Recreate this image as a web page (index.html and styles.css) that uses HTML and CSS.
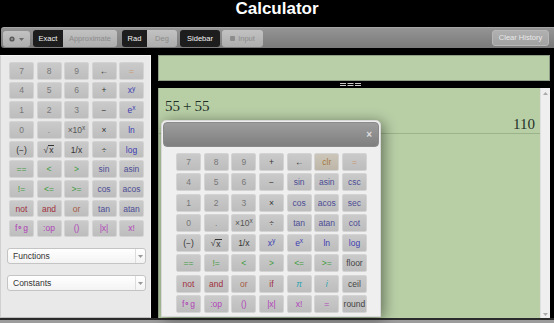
FILE: index.html
```html
<!DOCTYPE html>
<html>
<head>
<meta charset="utf-8">
<title>Calculator</title>
<link rel="stylesheet" href="styles.css">
</head>
<body>
<div class="app">
  <header class="title-bar"><h1 class="title">Calculator</h1></header>
  <div class="toolbar">
    <div class="tb-btn tb-light gear-btn">
      <svg width="6" height="6" viewBox="0 0 6 6"><circle cx="3" cy="3" r="2.6" fill="#5a5a5a"/><circle cx="3" cy="3" r="1" fill="#9a9a9a"/></svg>
      <svg width="5" height="3" viewBox="0 0 5 3"><path d="M0 0H5L2.5 3Z" fill="#6a6a6a"/></svg>
    </div>
    <div class="tb-group">
      <div class="tb-btn tb-dark w-exact">Exact</div>
      <div class="tb-btn tb-light w-approx">Approximate</div>
    </div>
    <div class="tb-group g-rad">
      <div class="tb-btn tb-dark w-rad">Rad</div>
      <div class="tb-btn tb-light w-deg">Deg</div>
    </div>
    <div class="tb-btn tb-dark w-sidebar solo">Sidebar</div>
    <div class="tb-btn tb-light w-input solo"><span class="chk"></span>Input</div>
    <div class="tb-btn clear-btn">Clear History</div>
  </div>

  <div class="main">
    <aside class="sidebar">
      <div class="pad side-pad">
        <div class="k c-num">7</div><div class="k c-num">8</div><div class="k c-num">9</div><div class="k c-op">←</div><div class="k c-eq">=</div>
        <div class="k c-num">4</div><div class="k c-num">5</div><div class="k c-num">6</div><div class="k c-op">+</div><div class="k c-pow">x<sup>y</sup></div>
        <div class="k c-num">1</div><div class="k c-num">2</div><div class="k c-num">3</div><div class="k c-op">−</div><div class="k c-pow">e<sup>x</sup></div>
        <div class="k c-num">0</div><div class="k c-num">.</div><div class="k c-sci">×10<sup>x</sup></div><div class="k c-op">×</div><div class="k c-pow">ln</div>
        <div class="k c-op">(−)</div><div class="k c-op">√<span class="ov">x</span></div><div class="k c-op">1/x</div><div class="k c-op">÷</div><div class="k c-pow">log</div>
        <div class="k c-cmp">==</div><div class="k c-cmp">&lt;</div><div class="k c-cmp">&gt;</div><div class="k c-trig">sin</div><div class="k c-trig">asin</div>
        <div class="k c-cmp">!=</div><div class="k c-cmp">&lt;=</div><div class="k c-cmp">&gt;=</div><div class="k c-trig">cos</div><div class="k c-trig">acos</div>
        <div class="k c-log">not</div><div class="k c-log">and</div><div class="k c-or">or</div><div class="k c-trig">tan</div><div class="k c-trig">atan</div>
        <div class="k c-fn">f∘g</div><div class="k c-fn">:op</div><div class="k c-fn">()</div><div class="k c-fn">|x|</div><div class="k c-fn">x!</div>
      </div>
      <div class="dropdown"><span class="dd-label">Functions</span><span class="dd-arrow"><svg width="5" height="3" viewBox="0 0 5 3"><path d="M0 0H5L2.5 3Z" fill="#999"/></svg></span></div>
      <div class="dropdown"><span class="dd-label">Constants</span><span class="dd-arrow"><svg width="5" height="3" viewBox="0 0 5 3"><path d="M0 0H5L2.5 3Z" fill="#999"/></svg></span></div>
    </aside>

    <section class="work">
      <div class="input-line"></div>
      <div class="splitter">
        <svg width="21" height="5" viewBox="0 0 21 5"><g stroke="#c8c8c8" stroke-width="1"><path d="M0 1.5H6M7.5 1.5H13.5M15 1.5H21M0 3.5H6M7.5 3.5H13.5M15 3.5H21"/></g></svg>
      </div>
      <div class="history">
        <div class="entries">
          <div class="entry">
            <div class="expr">55<span class="plus">+</span>55</div>
            <div class="result">110</div>
          </div>
        </div>
        <div class="scrollbar">
          <svg width="5" height="3" viewBox="0 0 5 3"><path d="M0 3H5L2.5 0Z" fill="#aaa"/></svg>
          <svg width="5" height="3" viewBox="0 0 5 3"><path d="M0 0H5L2.5 3Z" fill="#aaa"/></svg>
        </div>
      </div>
    </section>
  </div>
</div>

<div class="dialog">
  <div class="dialog-head"><span class="close">×</span></div>
  <div class="pad dlg-pad">
    <div class="k c-num">7</div><div class="k c-num">8</div><div class="k c-num">9</div><div class="k c-op">+</div><div class="k c-op">←</div><div class="k c-clr">clr</div><div class="k c-eq">=</div>
    <div class="k c-num">4</div><div class="k c-num">5</div><div class="k c-num">6</div><div class="k c-op">−</div><div class="k c-trig">sin</div><div class="k c-trig">asin</div><div class="k c-trig">csc</div>
    <div class="k c-num">1</div><div class="k c-num">2</div><div class="k c-num">3</div><div class="k c-op">×</div><div class="k c-trig">cos</div><div class="k c-trig">acos</div><div class="k c-trig">sec</div>
    <div class="k c-num">0</div><div class="k c-num">.</div><div class="k c-sci">×10<sup>x</sup></div><div class="k c-op">÷</div><div class="k c-trig">tan</div><div class="k c-trig">atan</div><div class="k c-trig">cot</div>
    <div class="k c-op">(−)</div><div class="k c-op">√<span class="ov">x</span></div><div class="k c-op">1/x</div><div class="k c-pow">x<sup>y</sup></div><div class="k c-pow">e<sup>x</sup></div><div class="k c-pow">ln</div><div class="k c-pow">log</div>
    <div class="k c-cmp">==</div><div class="k c-cmp">!=</div><div class="k c-cmp">&lt;</div><div class="k c-cmp">&gt;</div><div class="k c-cmp">&lt;=</div><div class="k c-cmp">&gt;=</div><div class="k c-dark">floor</div>
    <div class="k c-log">not</div><div class="k c-log">and</div><div class="k c-or">or</div><div class="k c-log">if</div><div class="k c-const">π</div><div class="k c-const">i</div><div class="k c-dark">ceil</div>
    <div class="k c-fn">f∘g</div><div class="k c-fn">:op</div><div class="k c-fn">()</div><div class="k c-fn">|x|</div><div class="k c-fn">x!</div><div class="k c-fn">=</div><div class="k c-dark">round</div>
  </div>
</div>
</body>
</html>
```
FILE: styles.css
```css
* { box-sizing: border-box; }
html, body { margin: 0; padding: 0; }
body {
  width: 554px;
  height: 323px;
  overflow: hidden;
  background: #9c9c9c;
  font-family: "Liberation Sans", Arial, sans-serif;
  position: relative;
}
.app {
  background: #000;
  height: 320px;
  border-bottom: 2px solid #2b2b2b;
  display: flex;
  flex-direction: column;
}
.title-bar { height: 27px; display: flex; justify-content: center; }
.title {
  margin: 0;
  color: #fff;
  font-size: 17px;
  font-weight: bold;
  line-height: 18px;
}
.toolbar {
  height: 21px;
  margin: 0 0 0 1px;
  padding: 2px 5px 0 2px;
  background: linear-gradient(#949494, #7a7a7a);
  border-top: 1px solid #a6a6a6;
  border-radius: 3px 0 0 3px;
  display: flex;
  align-items: flex-start;
}
.tb-btn {
  height: 17px;
  line-height: 17px;
  font-size: 7.5px;
  text-align: center;
  white-space: nowrap;
}
.tb-dark { background: #1d1d1d; color: #f4f4f4; }
.tb-light { background: linear-gradient(#c2c2c2, #adadad); color: #8c8c8c; }
.tb-group { display: flex; border-radius: 3px; overflow: hidden; margin-left: 3px; }
.g-rad { margin-left: 5px; }
.solo { border-radius: 3px; }
.gear-btn { width: 27px; border-radius: 3px; display: flex; align-items: center; justify-content: center; gap: 4px; margin-top: 1px; height: 16px; }
.w-exact { width: 30px; }
.w-approx { width: 54px; }
.w-rad { width: 25px; }
.w-deg { width: 30px; }
.w-sidebar { width: 40px; margin-left: 3px; }
.w-input { width: 41px; margin-left: 2px; display: flex; align-items: center; justify-content: center; gap: 3px; }
.chk { width: 5px; height: 5px; background: #8c8c8c; border-radius: 1px; display: inline-block; }
.clear-btn {
  margin-left: auto;
  width: 57px;
  height: 16px;
  line-height: 14px;
  border: 1px solid #b8b8b8;
  border-radius: 3px;
  background: linear-gradient(#b0b0b0, #a2a2a2);
  color: #e9e9e9;
}

.main {
  margin-top: 7px;
  height: 263px;
  display: flex;
  margin-right: 4px;
}
.sidebar {
  width: 151px;
  background: #e9e9e9;
  border-left: 1px solid #d0d0d0;
  border-right: 1px solid #f6f6f6;
  border-top: 1px solid #f3f3f3;
  border-bottom: 1px solid #bdbdbd;
  padding: 6px 6px 0 6px;
  margin-right: 7px;
}
.pad { display: grid; }
.side-pad {
  grid-template-columns: repeat(5, 25px);
  column-gap: 2.5px;
  grid-auto-rows: 17.5px;
  row-gap: 2.2px;
  margin-left: 2px;
}
.k {
  background: linear-gradient(#cacaca, #bdbdbd);
  border: 1px solid #d3d3d3;
  border-radius: 2px;
  font-size: 8.5px;
  display: flex;
  align-items: center;
  justify-content: center;
  white-space: nowrap;
  color: #666;
}
.k sup { font-size: 6.5px; line-height: 1; align-self: flex-start; margin-top: 3px; }
.ov { border-top: 1px solid currentColor; line-height: 8px; padding: 0 1px; }
.c-num { color: #777; }
.c-op { color: #333; }
.c-sci { color: #555; }
.c-eq { color: #c9966a; }
.c-clr { color: #a57b3e; background: linear-gradient(#ccc6ba, #bdb6a8); }
.c-pow { color: #3d3db2; }
.c-trig { color: #4d4d95; }
.c-cmp { color: #3d9b3d; }
.c-log { color: #a0303e; }
.c-or { color: #a55a45; }
.c-fn { color: #b043b8; }
.c-const { color: #2ba2b0; font-style: italic; }
.c-dark { color: #444; }

.dropdown {
  margin-top: 11px;
  width: 139px;
  height: 16px;
  background: linear-gradient(#ffffff, #f3f3f3);
  border: 1px solid #c4c4c4;
  border-radius: 3px;
  display: flex;
  align-items: center;
  font-size: 8.5px;
  color: #333;
}
.dropdown + .dropdown { margin-top: 11px; }
.dd-label { flex: 1; padding-left: 5px; }
.dd-arrow {
  width: 10px;
  height: 100%;
  border-left: 1px solid #ddd;
  display: flex;
  align-items: center;
  justify-content: center;
}

.work { flex: 1; display: flex; flex-direction: column; }
.input-line {
  height: 26px;
  background: #b9cfa7;
  border: 1px solid #8f9e86;
}
.splitter {
  height: 7px;
  display: flex;
  align-items: center;
  justify-content: center;
  padding-right: 8px;
}
.history {
  flex: 1;
  display: flex;
  background: #b8cfa6;
  border-left: 1px solid #97a98c;
}
.entries { flex: 1; }
.entry {
  padding: 9px 2px 0 6px;
  border-bottom: 1px solid #9bb38b;
  font-family: "Liberation Serif", "Times New Roman", serif;
  color: #1f2f2a;
  font-size: 15px;
}
.expr { line-height: 18px; }
.plus { padding: 0 3px; }
.result { line-height: 17px; margin-top: 1px; text-align: right; padding-right: 3px; }
.scrollbar {
  width: 10px;
  background: #efefef;
  border-left: 1px solid #e0e0e0;
  display: flex;
  flex-direction: column;
  justify-content: space-between;
  align-items: center;
  padding: 4px 0 2px;
}

.dialog {
  position: absolute;
  left: 161px;
  top: 120px;
  width: 220px;
  height: 197px;
  background: #efefef;
  border: 1px solid #d8d8d8;
  border-radius: 5px 5px 0 0;
  padding: 1px;
  box-shadow: 3px 2px 14px rgba(0, 0, 0, 0.45);
}
.dialog-head {
  height: 25px;
  border-radius: 4px;
  background: linear-gradient(#9d9d9d, #7f7f7f);
  border: 1px solid #8a8a8a;
  display: flex;
  align-items: center;
  justify-content: flex-end;
  padding-right: 6px;
}
.close { color: #dedede; font-size: 10px; font-weight: bold; line-height: 10px; }
.dlg-pad {
  grid-template-columns: repeat(7, 25px);
  column-gap: 2.67px;
  grid-auto-rows: 18px;
  row-gap: 2.3px;
  padding: 6px 0 0 13px;
}
```
